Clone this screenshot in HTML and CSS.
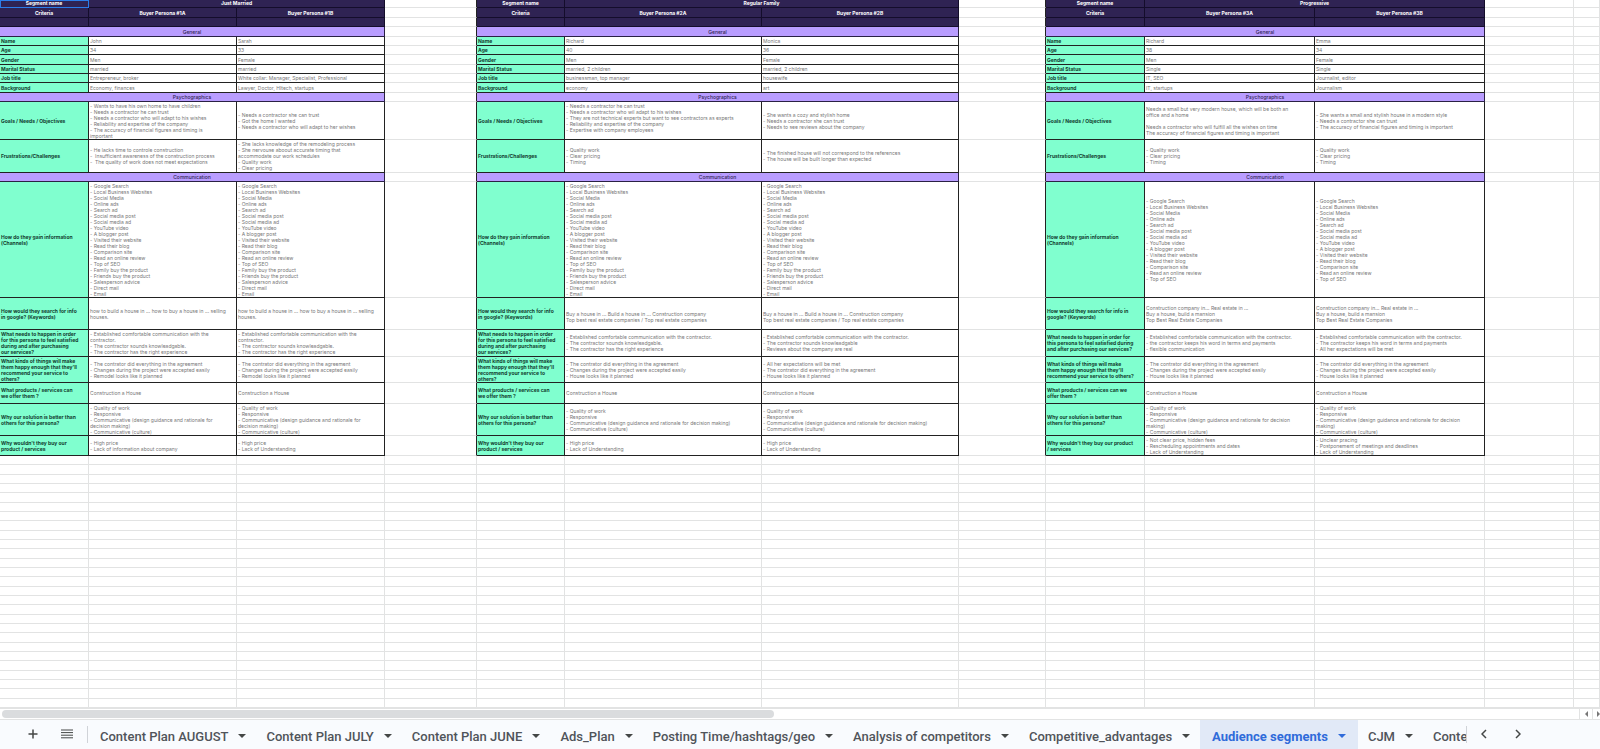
FILE: index.html
```
<!DOCTYPE html>
<html lang="en">
<head>
    <meta charset="UTF-8">
    <meta name="viewport" content="width=device-width, initial-scale=1.0">
    <title>Audience segments</title>
    <link rel="stylesheet" href="styles.css">
</head>
<body>
    <main class="sheet">
        <table class="grid">
            <colgroup>
                <col class="w-89"><col class="w-148"><col class="w-148"><col class="w-92">
                <col class="w-88"><col class="w-197"><col class="w-197"><col class="w-87">
                <col class="w-99"><col class="w-170"><col class="w-170"><col class="w-89"><col>
            </colgroup>
            <tbody class="segments">
                <tr class="h-8 head">
                    <th class="selected">Segment name</th><th colspan="2">Just Married</th><td class="gap"></td>
                    <th>Segment name</th><th colspan="2">Regular Family</th><td class="gap"></td>
                    <th>Segment name</th><th colspan="2">Progressive</th><td class="out"></td><td class="out"></td>
                </tr>
                <tr class="h-10 head">
                    <th>Criteria</th><th>Buyer Persona #1A</th><th>Buyer Persona #1B</th><td class="gap"></td>
                    <th>Criteria</th><th>Buyer Persona #2A</th><th>Buyer Persona #2B</th><td class="gap"></td>
                    <th>Criteria</th><th>Buyer Persona #3A</th><th>Buyer Persona #3B</th><td class="out"></td><td class="out"></td>
                </tr>
                <tr class="h-9 head">
                    <th></th><th></th><th></th><td class="gap"></td>
                    <th></th><th></th><th></th><td class="gap"></td>
                    <th></th><th></th><th></th><td class="out"></td><td class="out"></td>
                </tr>
                <tr class="h-10 section">
                    <th colspan="3">General</th><td class="gap"></td>
                    <th colspan="3">General</th><td class="gap"></td>
                    <th colspan="3">General</th><td class="out"></td><td class="out"></td>
                </tr>
                <tr class="h-9">
                    <th>Name</th><td>John</td><td>Sarah</td><td class="gap"></td>
                    <th>Name</th><td>Richard</td><td>Monica</td><td class="gap"></td>
                    <th>Name</th><td>Richard</td><td>Emma</td><td class="out"></td><td class="out"></td>
                </tr>
                <tr class="h-9">
                    <th>Age</th><td>34</td><td>33</td><td class="gap"></td>
                    <th>Age</th><td>40</td><td>36</td><td class="gap"></td>
                    <th>Age</th><td>38</td><td>34</td><td class="out"></td><td class="out"></td>
                </tr>
                <tr class="h-10">
                    <th>Gender</th><td>Men</td><td>Female</td><td class="gap"></td>
                    <th>Gender</th><td>Men</td><td>Female</td><td class="gap"></td>
                    <th>Gender</th><td>Men</td><td>Female</td><td class="out"></td><td class="out"></td>
                </tr>
                <tr class="h-9">
                    <th>Marital Status</th><td>married</td><td>married</td><td class="gap"></td>
                    <th>Marital Status</th><td>married, 2 children</td><td>married, 2 children</td><td class="gap"></td>
                    <th>Marital Status</th><td>Single</td><td>Single</td><td class="out"></td><td class="out"></td>
                </tr>
                <tr class="h-9">
                    <th>Job title</th><td>Entrepreneur, broker</td><td>White collar: Manager, Specialist, Professional</td><td class="gap"></td>
                    <th>Job title</th><td>businessman, top manager</td><td>housewife</td><td class="gap"></td>
                    <th>Job title</th><td>IT, SEO</td><td>Journalist, editor</td><td class="out"></td><td class="out"></td>
                </tr>
                <tr class="h-10">
                    <th>Background</th><td>Economy, finances</td><td>Lawyer, Doctor, HItech, startups</td><td class="gap"></td>
                    <th>Background</th><td>economy</td><td>art</td><td class="gap"></td>
                    <th>Background</th><td>IT, startups</td><td>Journalism</td><td class="out"></td><td class="out"></td>
                </tr>
                <tr class="h-9 section">
                    <th colspan="3">Psychographics</th><td class="gap"></td>
                    <th colspan="3">Psychographics</th><td class="gap"></td>
                    <th colspan="3">Psychographics</th><td class="out"></td><td class="out"></td>
                </tr>
                <tr class="h-38">
                    <th>Goals / Needs / Objectives</th>
                    <td>- Wants to have his own home to have children<br>- Needs a contractor he can trust<br>- Needs a contractor who will adapt to his wishes<br>- Reliability and expertise of the company<br>- The accuracy of financial figures and timing is<br>important</td>
                    <td>- Needs a contractor she can trust<br>- Got the home I wanted<br>- Needs a contractor who will adapt to her wishes</td>
                    <td class="gap"></td>
                    <th>Goals / Needs / Objectives</th>
                    <td>- Needs a contractor he can trust<br>- Needs a contractor who wil adapt to his wishes<br>- They are not technical experts but want to see contractors as experts<br>- Reliability and expertise of the company<br>- Expertise with company employees<br>&nbsp;</td>
                    <td>- She wants a cozy and stylish home<br>- Needs a contractor she can trust<br>- Needs to see reviews about the company</td>
                    <td class="gap"></td>
                    <th>Goals / Needs / Objectives</th>
                    <td>Needs a small but very modern house, which will be both an<br>office and a home<br><br>Needs a contractor who will fulfill all the wishes on time<br>The accuracy of financial figures and timing is important</td>
                    <td>- She wants a small and stylish house in a modern style<br>- Needs a contractor she can trust<br>- The accuracy of financial figures and timing is important</td>
                    <td class="out"></td><td class="out"></td>
                </tr>
                <tr class="h-33">
                    <th>Frustrations/Challenges</th>
                    <td>- He lacks time to controle construction<br>-&nbsp; Insufficient awareness of the construction process<br>-&nbsp; The quality of work does not meet expectations</td>
                    <td>- She lacks knowledge of the remodeling process<br>- She nervouse aboout accurate timing that<br>accommodate our work schedules<br>- Quality work<br>- Clear pricing</td>
                    <td class="gap"></td>
                    <th>Frustrations/Challenges</th>
                    <td>- Quality work<br>- Clear pricing<br>- Timing</td>
                    <td>- The finished house will not correspond to the references<br>- The house will be built longer than expected</td>
                    <td class="gap"></td>
                    <th>Frustrations/Challenges</th>
                    <td>- Quality work<br>- Clear pricing<br>- Timing</td>
                    <td>- Quality work<br>- Clear pricing<br>- Timing</td>
                    <td class="out"></td><td class="out"></td>
                </tr>
                <tr class="h-9 section">
                    <th colspan="3">Communication</th><td class="gap"></td>
                    <th colspan="3">Communication</th><td class="gap"></td>
                    <th colspan="3">Communication</th><td class="out"></td><td class="out"></td>
                </tr>
                <tr class="h-116">
                    <th>How do they gain information<br>(Channels)</th>
                    <td>- Google Search<br>- Local Business Websites<br>- Social Media<br>- Online ads<br>- Search ad<br>- Social media post<br>- Social media ad<br>- YouTube video<br>- A blogger post<br>- Visited their website<br>- Read their blog<br>- Comparison site<br>- Read an online review<br>- Top of SEO<br>- Family buy the product<br>- Friends buy the product<br>- Salesperson advice<br>- Direct mail<br>- Email</td>
                    <td>- Google Search<br>- Local Business Websites<br>- Social Media<br>- Online ads<br>- Search ad<br>- Social media post<br>- Social media ad<br>- YouTube video<br>- A blogger post<br>- Visited their website<br>- Read their blog<br>- Comparison site<br>- Read an online review<br>- Top of SEO<br>- Family buy the product<br>- Friends buy the product<br>- Salesperson advice<br>- Direct mail<br>- Email</td>
                    <td class="gap"></td>
                    <th>How do they gain information<br>(Channels)</th>
                    <td>- Google Search<br>- Local Business Websites<br>- Social Media<br>- Online ads<br>- Search ad<br>- Social media post<br>- Social media ad<br>- YouTube video<br>- A blogger post<br>- Visited their website<br>- Read their blog<br>- Comparison site<br>- Read an online review<br>- Top of SEO<br>- Family buy the product<br>- Friends buy the product<br>- Salesperson advice<br>- Direct mail<br>- Email</td>
                    <td>- Google Search<br>- Local Business Websites<br>- Social Media<br>- Online ads<br>- Search ad<br>- Social media post<br>- Social media ad<br>- YouTube video<br>- A blogger post<br>- Visited their website<br>- Read their blog<br>- Comparison site<br>- Read an online review<br>- Top of SEO<br>- Family buy the product<br>- Friends buy the product<br>- Salesperson advice<br>- Direct mail<br>- Email</td>
                    <td class="gap"></td>
                    <th>How do they gain information<br>(Channels)</th>
                    <td>- Google Search<br>- Local Business Websites<br>- Social Media<br>- Online ads<br>- Search ad<br>- Social media post<br>- Social media ad<br>- YouTube video<br>- A blogger post<br>- Visited their website<br>- Read their blog<br>- Comparison site<br>- Read an online review<br>- Top of SEO</td>
                    <td>- Google Search<br>- Local Business Websites<br>- Social Media<br>- Online ads<br>- Search ad<br>- Social media post<br>- Social media ad<br>- YouTube video<br>- A blogger post<br>- Visited their website<br>- Read their blog<br>- Comparison site<br>- Read an online review<br>- Top of SEO</td>
                    <td class="out"></td><td class="out"></td>
                </tr>
                <tr class="h-32">
                    <th>How would they search for info<br>in google? (Keywords)</th>
                    <td>how to build a house in ... how to buy a house in ... selling<br>houses.</td>
                    <td>how to build a house in ... how to buy a house in ... selling<br>houses.</td>
                    <td class="gap"></td>
                    <th>How would they search for info<br>in google? (Keywords)</th>
                    <td><br>Buy a house in ... Build a house in ... Construction company<br>Top best real estate companies / Top real estate companies</td>
                    <td><br>Buy a house in ... Build a house in ... Construction company<br>Top best real estate companies / Top real estate companies</td>
                    <td class="gap"></td>
                    <th>How would they search for info in<br>google? (Keywords)</th>
                    <td>Construction company in... Real estate in ...<br>Buy a house, build a mansion<br>Top Best Real Estate Companies</td>
                    <td>Construction company in... Real estate in ...<br>Buy a house, build a mansion<br>Top Best Real Estate Companies</td>
                    <td class="out"></td><td class="out"></td>
                </tr>
                <tr class="h-27">
                    <th>What needs to happen in order<br>for this persona to feel satisfied<br>during and after purchasing<br>our services?</th>
                    <td>- Established comfortable communication with the<br>contractor.<br>- The contractor sounds knowleadgable.<br>- The contractor has the right experience</td>
                    <td>- Established comfortable communication with the<br>contractor.<br>- The contractor sounds knowleadgable.<br>- The contractor has the right experience</td>
                    <td class="gap"></td>
                    <th>What needs to happen in order<br>for this persona to feel satisfied<br>during and after purchasing<br>our services?</th>
                    <td>- Established comfortable communication with the contractor.<br>- The contractor sounds knowleadgable.<br>- The contractor has the right experience</td>
                    <td>- Established comfortable communication with the contractor.<br>- The contractor sounds knowleadgable<br>- Reviews about the company are real</td>
                    <td class="gap"></td>
                    <th>What needs to happen in order for<br>this persona to feel satisfied during<br>and after purchasing our services?</th>
                    <td>- Established comfortable communication with the contractor.<br>- the contractor keeps his word in terms and payments<br>- flexible communication</td>
                    <td>- Established comfortable communication with the contractor.<br>- The contractor keeps his word in terms and payments<br>- All her expectations will be met</td>
                    <td class="out"></td><td class="out"></td>
                </tr>
                <tr class="h-26">
                    <th>What kinds of things will make<br>them happy enough that they'll<br>recommend your service to<br>others?</th>
                    <td>- The contrator did everything in the agreement<br>- Changes during the project were accepted easily<br>- Remodel looks like it planned</td>
                    <td>- The contrator did everything in the agreement<br>- Changes during the project were accepted easily<br>- Remodel looks like it planned</td>
                    <td class="gap"></td>
                    <th>What kinds of things will make<br>them happy enough that they'll<br>recommend your service to<br>others?</th>
                    <td>- The contrator did everything in the agreement<br>- Changes during the project were accepted easily<br>- House looks like it planned</td>
                    <td>- All her expectations will be met<br>- The contrator did everything in the agreement<br>- House looks like it planned</td>
                    <td class="gap"></td>
                    <th>What kinds of things will make<br>them happy enough that they'll<br>recommend your service to others?</th>
                    <td>- The contrator did everything in the agreement<br>- Changes during the project were accepted easily<br>- House looks like it planned</td>
                    <td>- The contrator did everything in the agreement<br>- Changes during the project were accepted easily<br>- House looks like it planned</td>
                    <td class="out"></td><td class="out"></td>
                </tr>
                <tr class="h-21">
                    <th>What products / services can<br>we offer them ?</th><td>Construction a House</td><td>Construction a House</td><td class="gap"></td>
                    <th>What products / services can<br>we offer them ?</th><td>Construction a House</td><td>Construction a House</td><td class="gap"></td>
                    <th>What products / services can we<br>offer them ?</th><td>Construction a House</td><td>Construction a House</td><td class="out"></td><td class="out"></td>
                </tr>
                <tr class="h-32">
                    <th>Why our solution is better than<br>others for this persona?</th>
                    <td>- Quality of work<br>- Responsive<br>- Communicative (design guidance and rationale for<br>decision making)<br>- Communicative (culture)</td>
                    <td>- Quality of work<br>- Responsive<br>- Communicative (design guidance and rationale for<br>decision making)<br>- Communicative (culture)</td>
                    <td class="gap"></td>
                    <th>Why our solution is better than<br>others for this persona?</th>
                    <td>- Quality of work<br>- Responsive<br>- Communicative (design guidance and rationale for decision making)<br>- Communicative (culture)</td>
                    <td>- Quality of work<br>- Responsive<br>- Communicative (design guidance and rationale for decision making)<br>- Communicative (culture)</td>
                    <td class="gap"></td>
                    <th>Why our solution is better than<br>others for this persona?</th>
                    <td>- Quality of work<br>- Responsive<br>- Communicative (design guidance and rationale for decision<br>making)<br>- Communicative (culture)</td>
                    <td>- Quality of work<br>- Responsive<br>- Communicative (design guidance and rationale for decision<br>making)<br>- Communicative (culture)</td>
                    <td class="out"></td><td class="out"></td>
                </tr>
                <tr class="h-20">
                    <th>Why wouldn't they buy our<br>product / services</th>
                    <td>- High price<br>- Lack of information about company</td>
                    <td>- High price<br>- Lack of Understanding</td>
                    <td class="gap"></td>
                    <th>Why wouldn't they buy our<br>product / services</th>
                    <td>- High price<br>- Lack of Understanding</td>
                    <td>- High price<br>- Lack of Understanding</td>
                    <td class="gap"></td>
                    <th>Why wouldn't they buy our product<br>/ services</th>
                    <td>- Not clear price, hidden fees<br>- Rescheduling appointments and dates<br>- Lack of Understanding</td>
                    <td>- Unclear pracing<br>- Postponement of meetings and deadlines<br>- Lack of Understanding</td>
                    <td class="out"></td><td class="out"></td>
                </tr>
            </tbody>
            <tbody class="blank" id="blankRows"></tbody>
        </table>
    </main>

    <div class="scrollbar">
        <div class="scroll-track"><div class="scroll-thumb"></div></div>
        <button class="scroll-button" aria-label="Scroll left"><svg width="3" height="6" viewBox="0 0 3 6"><path d="M3 0v6L0 3z"/></svg></button>
        <button class="scroll-button" aria-label="Scroll right"><svg width="3" height="6" viewBox="0 0 3 6"><path d="M0 0v6l3-3z"/></svg></button>
    </div>

    <footer class="tab-bar">
        <button class="tool" aria-label="Add sheet"><svg width="10" height="10" viewBox="0 0 10 10"><path d="M5 0.500v9M0.500 5h9"/></svg></button>
        <button class="tool" aria-label="All sheets"><svg class="thin" width="12" height="10" viewBox="0 0 12 10"><path d="M0 1h12M0 3.600h12M0 6.200h12M0 8.800h12"/></svg></button>
        <span class="divider"></span>
        <nav class="tabs">
            <button class="tab">Content Plan AUGUST<span class="caret"></span></button>
            <button class="tab">Content Plan JULY<span class="caret"></span></button>
            <button class="tab">Content Plan JUNE<span class="caret"></span></button>
            <button class="tab">Ads_Plan<span class="caret"></span></button>
            <button class="tab">Posting Time/hashtags/geo<span class="caret"></span></button>
            <button class="tab">Analysis of competitors<span class="caret"></span></button>
            <button class="tab">Competitive_advantages<span class="caret"></span></button>
            <button class="tab active">Audience segments<span class="caret"></span></button>
            <button class="tab">CJM<span class="caret"></span></button>
            <button class="tab">Content<span class="caret"></span></button>
        </nav>
        <span class="divider"></span>
        <button class="tool" aria-label="Previous tabs"><svg width="6" height="10" viewBox="0 0 6 10"><path d="M5 1L1 5l4 4"/></svg></button>
        <button class="tool" aria-label="Next tabs"><svg width="6" height="10" viewBox="0 0 6 10"><path d="M1 1l4 4-4 4"/></svg></button>
    </footer>

    <script>
        // Empty rows below the segments
        const blankRows = document.getElementById('blankRows');
        for (let i = 0; i < 27; i++) {
            const row = blankRows.insertRow();
            for (let j = 0; j < 13; j++) {
                row.insertCell();
            }
        }
    </script>
</body>
</html>
```
FILE: styles.css
```
* {
    box-sizing: border-box;
}

body {
    margin: 0;
    height: 100vh;
    display: flex;
    flex-direction: column;
    overflow: hidden;
    background-color: #ffffff;
    font-family: Roboto, "Liberation Sans", sans-serif;
}

button {
    border: none;
    background: none;
    padding: 0;
    font-family: inherit;
    cursor: pointer;
}

.sheet {
    flex: 1;
    min-height: 0;
    overflow: hidden;
}

.grid {
    width: 100%;
    table-layout: fixed;
    border-collapse: separate;
    border-spacing: 0;
    font-family: Inter, sans-serif;
    font-size: 5px;
    line-height: 6px;
    color: #777777;
}

.w-87 { width: 87px; }
.w-88 { width: 88px; }
.w-89 { width: 89px; }
.w-92 { width: 92px; }
.w-99 { width: 99px; }
.w-148 { width: 148px; }
.w-170 { width: 170px; }
.w-197 { width: 197px; }

.h-8 { height: 8px; }
.h-9 { height: 9px; }
.h-10 { height: 10px; }
.h-20 { height: 20px; }
.h-21 { height: 21px; }
.h-26 { height: 26px; }
.h-27 { height: 27px; }
.h-32 { height: 32px; }
.h-33 { height: 33px; }
.h-38 { height: 38px; }
.h-116 { height: 116px; }

.grid th,
.grid td {
    padding: 0 1px;
    border-right: 1px solid #222222;
    border-bottom: 1px solid #222222;
    text-align: left;
    vertical-align: middle;
    white-space: nowrap;
}

.grid th {
    background-color: #80ffcf;
    color: #12402f;
    font-weight: 700;
}

.grid .head th {
    background-color: #2f2353;
    border-color: #140d2b;
    color: #ffffff;
    text-align: center;
}

.grid .h-8 th {
    vertical-align: top;
}

.grid .section th {
    background-color: #b99dff;
    border-color: #2a2144;
    color: #2f2353;
    font-weight: 500;
    text-align: center;
}

.grid .selected {
    outline: 1px solid #2b7de9;
    outline-offset: -1px;
}

.grid td.gap {
    border-bottom-color: #e2e3e3;
}

.grid td.out,
.grid .blank td {
    border-color: #e2e3e3;
}

.blank tr {
    height: 9px;
}

.blank tr:nth-child(3n + 2) {
    height: 10px;
}

.scrollbar {
    display: flex;
    height: 12px;
    border-top: 1px solid #e2e3e3;
    border-bottom: 1px solid #e2e3e3;
    background-color: #ffffff;
}

.scroll-track {
    flex: 1;
    padding: 1px 2px;
}

.scroll-thumb {
    width: 49%;
    height: 8px;
    border-radius: 4px;
    background-color: #dadcde;
}

.scroll-button {
    flex: none;
    width: 13px;
    border-left: 1px solid #e2e3e3;
    display: flex;
    align-items: center;
    justify-content: center;
    fill: #777777;
}

.scroll-button:last-child {
    width: 8px;
    justify-content: flex-end;
}

.tab-bar {
    display: flex;
    align-items: center;
    height: 29px;
    padding-left: 16px;
    padding-right: 65px;
    background-color: #f9fbfe;
}

.tool {
    width: 34px;
    height: 29px;
    padding-bottom: 1px;
    flex: none;
    display: flex;
    align-items: center;
    justify-content: center;
}

.tool svg {
    fill: none;
    stroke: #444746;
    stroke-width: 1.5;
}

.tool .thin {
    stroke-width: 1;
}

.divider {
    flex: none;
    width: 1px;
    height: 17px;
    background-color: #d0d3d8;
}

.divider:first-of-type {
    margin: 0 2px 0 3px;
}

.tabs {
    flex: 1;
    min-width: 0;
    height: 29px;
    display: flex;
    overflow: hidden;
}

.tab {
    flex: none;
    display: flex;
    align-items: center;
    gap: 10px;
    padding: 3px 10px 0;
    font-size: 13px;
    font-weight: 500;
    color: #50545a;
}

.caret {
    border: 4px solid transparent;
    border-top-color: #444746;
    border-bottom: none;
}

.active {
    padding: 3px 12px 0;
    background-color: #e1e9f7;
    color: #2f6bda;
    font-weight: 700;
}

.active .caret {
    border-top-color: #2f6bda;
}
```
